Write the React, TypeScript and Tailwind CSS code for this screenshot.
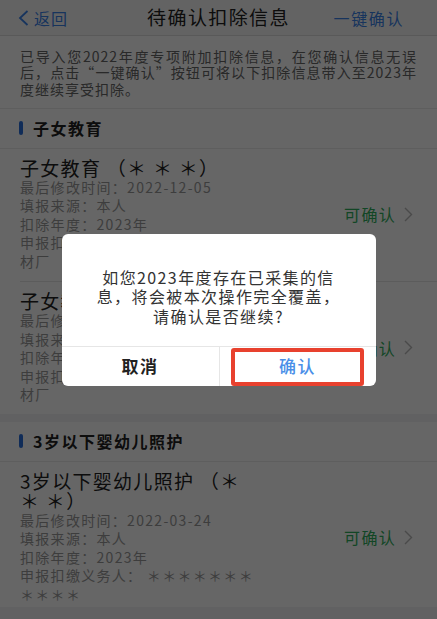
import React from 'react';

type Entry = {
  title: string;
  lines: string[];
  pb: string;
};

const childEdu: Entry[] = [
  {
    title: '子女教育 （＊ ＊ ＊）',
    lines: ['最后修改时间：2022-12-05', '填报来源：本人', '扣除年度：2023年', '申报扣缴义务人： ＊＊＊＊＊＊建材厂'],
    pb: 'pb-[11px]',
  },
  {
    title: '子女教育 （＊ ＊ ＊）',
    lines: ['最后修改时间：2022-12-05', '填报来源：本人', '扣除年度：2023年', '申报扣缴义务人： ＊＊＊＊＊＊建材厂'],
    pb: 'pb-[10px]',
  },
];

const infantCare: Entry[] = [
  {
    title: '3岁以下婴幼儿照护 （＊ ＊ ＊）',
    lines: ['最后修改时间：2022-03-24', '填报来源：本人', '扣除年度：2023年', '申报扣缴义务人： ＊＊＊＊＊＊＊＊＊＊＊'],
    pb: 'pb-[4px]',
  },
];

const SectionHead = ({ label }: { label: string }) => (
  <div className="flex h-[40px] items-center gap-[10px] border-b border-[#ececec] bg-white pl-[19px]">
    <span className="h-[14px] w-[4px] rounded-full bg-[#2a6fdb]" />
    <span className="text-[16px] font-bold tracking-[1.5px] text-[#222]">{label}</span>
  </div>
);

const Card = ({ entry }: { entry: Entry }) => (
  <div className={`flex items-center bg-white pl-[20px] pr-[24px] pt-[9px] ${entry.pb}`}>
    <div className="w-[239px] shrink-0">
      <div className="text-[19px] leading-[20px] tracking-[1.3px] text-[#222]">{entry.title}</div>
      <div className="text-[14px] leading-[18.5px] tracking-[1.3px] text-[#9a9a9a]">
        {entry.lines.map((l, i) => (
          <div key={i}>{l}</div>
        ))}
      </div>
    </div>
    <div className="ml-auto flex items-center">
      <span className="text-[16px] tracking-[1.3px] text-[#2fae5c]">可确认</span>
      <svg width="9" height="15" viewBox="0 0 9 15" className="ml-[8px]">
        <polyline points="1,1 7.5,7.5 1,14" fill="none" stroke="#b8b8b8" strokeWidth="1.4" />
      </svg>
    </div>
  </div>
);

export default function App() {
  return (
    <div className="relative h-[619px] w-full overflow-hidden bg-[#f2f3f5] font-['Noto_Sans_CJK_SC',sans-serif]">
      {/* nav bar */}
      <div className="grid h-[36px] grid-cols-[1fr_auto_1fr] items-center border-b border-[#dedede] bg-[#f8f8f8]">
        <div className="flex items-center gap-[5px] pl-[18px] text-[#3b82e8]">
          <svg width="11" height="16" viewBox="0 0 11 16">
            <polyline points="9.5,1 2,8 9.5,15" fill="none" stroke="currentColor" strokeWidth="1.8" />
          </svg>
          <span className="text-[16px] tracking-[1px]">返回</span>
        </div>
        <div className="text-[19px] tracking-[1.4px] text-[#222]">待确认扣除信息</div>
        <div className="flex justify-end pr-[33px] text-[16px] tracking-[1.6px] text-[#3b82e8]">一键确认</div>
      </div>

      {/* notice */}
      <div className="border-b border-[#ececec] bg-white px-[20px] pb-[11px] pt-[12px] text-justify text-[14px] leading-[16.3px] tracking-[1px] text-[#666]">
        已导入您2022年度专项附加扣除信息，在您确认信息无误后，点击“一键确认”按钮可将以下扣除信息带入至2023年度继续享受扣除。
      </div>

      <SectionHead label="子女教育" />
      <Card entry={childEdu[0]} />
      <div className="bg-white pl-[20px]">
        <div className="h-px bg-[#e6e6e6]" />
      </div>
      <Card entry={childEdu[1]} />

      <div className="h-[8px]" />

      <SectionHead label="3岁以下婴幼儿照护" />
      <Card entry={infantCare[0]} />

      {/* dim overlay + dialog */}
      <div className="absolute inset-0 flex items-center justify-center bg-black/60">
        <div className="w-[314px] overflow-hidden rounded-[6px] bg-white">
          <div className="h-[112px] pt-[34px] text-center text-[16px] leading-[19.5px] tracking-[1.4px] text-[#333]">
            如您2023年度存在已采集的信
            <br />
            息，将会被本次操作完全覆盖，
            <br />
            请确认是否继续?
          </div>
          <div className="grid h-[40px] grid-cols-2 border-t border-[#e6e6e6]">
            <button className="text-[17px] font-semibold tracking-[1.5px] text-[#222]">取消</button>
            <button className="relative border-l border-[#e6e6e6] text-[17px] font-medium tracking-[1.5px] text-[#4a8fe8]">
              确认
              <span className="absolute bottom-0 left-[11px] right-[12px] top-px rounded-[3px] border-[4px] border-[#e8412e]" />
            </button>
          </div>
        </div>
      </div>
    </div>
  );
}
